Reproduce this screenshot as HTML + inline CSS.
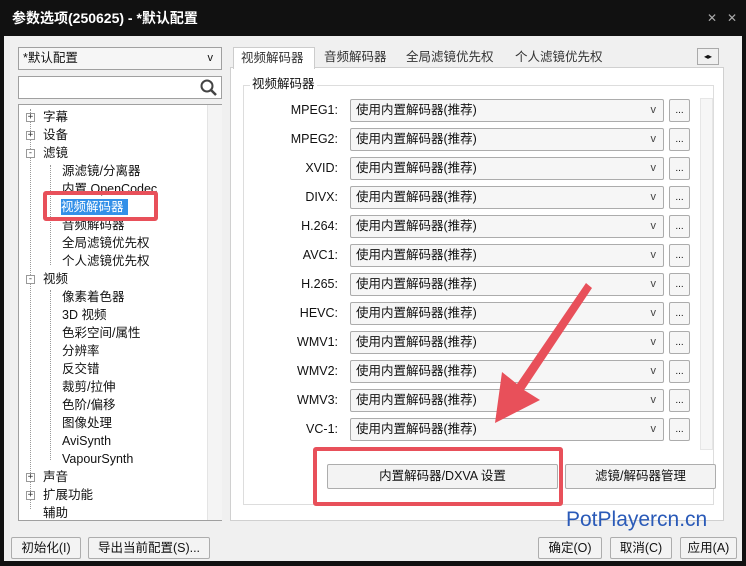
<!DOCTYPE html><html><head><meta charset="utf-8"><style>
*{box-sizing:border-box;margin:0;padding:0}
body{width:746px;height:566px;background:#111;position:relative;overflow:hidden;font-family:"Liberation Sans","Noto Sans CJK SC",sans-serif;font-size:12.5px;line-height:16px;color:#111}
.a{position:absolute}
.win{left:4px;top:36px;width:738px;height:525px;background:#f0f0f0}
.box{position:absolute;background:#fff;border:1px solid #a0a0a0}
.btn{position:absolute;background:#f3f3f3;border:1px solid #adadad;border-radius:2px;text-align:center;font-size:12.5px}
.tree div{position:absolute;white-space:nowrap;font-size:12.5px;line-height:16px}
.lbl{position:absolute;width:80px;text-align:right;font-size:12.5px;line-height:16px}
.cb{position:absolute;left:350px;width:314px;height:23px;background:#f6f6f6;border:1px solid #acacac;border-radius:2px;padding:0 5px;font-size:12.5px;line-height:21px}
.cb:after{content:"v";position:absolute;right:7px;top:0;font-size:11px;color:#444}
.dot{position:absolute;left:669px;width:21px;height:23px;background:#f6f6f6;border:1px solid #acacac;border-radius:2px;text-align:center;font-size:10px;line-height:22px}
.tree .pm{position:absolute;width:9px;height:9px;border:1px solid #999;background:#fff;font-size:9px;line-height:7px;text-align:center;color:#333;font-family:"DejaVu Sans Mono",monospace}
</style></head><body>
<div class="a" style="left:12px;top:10px;color:#fff;font-size:14px;font-weight:bold">参数选项(250625) - *默认配置</div>
<div class="a" style="left:707px;top:10px;color:#aaa;font-size:12px">✕&nbsp;&nbsp;&nbsp;✕</div>
<div class="a win"></div>
<div class="box" style="left:18px;top:47px;width:204px;height:23px;background:#f6f6f6;padding:0 4px;line-height:21px">*默认配置<span class="a" style="right:8px;top:0;font-size:11px">v</span></div>
<div class="box" style="left:18px;top:76px;width:204px;height:23px"><svg class="a" style="right:3px;top:2px" width="18" height="18"><circle cx="7" cy="7" r="5.5" stroke="#444" stroke-width="2" fill="none"/><line x1="11" y1="11" x2="16" y2="16" stroke="#444" stroke-width="2.5"/></svg></div>
<div class="box tree" style="left:18px;top:104px;width:204px;height:417px">
<div class="a" style="left:188px;top:0;width:15px;height:415px;background:#f4f4f4;border-left:1px solid #e4e4e4"></div>
<div class="a" style="left:11px;top:4px;height:400px;border-left:1px dotted #999"></div>
<div class="a" style="left:31px;top:60px;height:100px;border-left:1px dotted #999"></div>
<div class="a" style="left:31px;top:185px;height:170px;border-left:1px dotted #999"></div>
<div class="pm" style="left:7px;top:8px">+</div><div style="left:24px;top:4px">字幕</div>
<div class="pm" style="left:7px;top:26px">+</div><div style="left:24px;top:22px">设备</div>
<div class="pm" style="left:7px;top:44px">-</div><div style="left:24px;top:40px">滤镜</div>
<div style="left:43px;top:58px">源滤镜/分离器</div>
<div style="left:43px;top:76px">内置 OpenCodec</div>
<div style="left:42px;top:94px;width:67px;background:#3390e8;color:#fff">视频解码器</div>
<div style="left:43px;top:112px">音频解码器</div>
<div style="left:43px;top:130px">全局滤镜优先权</div>
<div style="left:43px;top:148px">个人滤镜优先权</div>
<div class="pm" style="left:7px;top:170px">-</div><div style="left:24px;top:166px">视频</div>
<div style="left:43px;top:184px">像素着色器</div>
<div style="left:43px;top:202px">3D 视频</div>
<div style="left:43px;top:220px">色彩空间/属性</div>
<div style="left:43px;top:238px">分辨率</div>
<div style="left:43px;top:256px">反交错</div>
<div style="left:43px;top:274px">裁剪/拉伸</div>
<div style="left:43px;top:292px">色阶/偏移</div>
<div style="left:43px;top:310px">图像处理</div>
<div style="left:43px;top:328px">AviSynth</div>
<div style="left:43px;top:346px">VapourSynth</div>
<div class="pm" style="left:7px;top:368px">+</div><div style="left:24px;top:364px">声音</div>
<div class="pm" style="left:7px;top:386px">+</div><div style="left:24px;top:382px">扩展功能</div>
<div style="left:24px;top:400px">辅助</div>
</div>
<div class="a" style="left:43px;top:191px;width:115px;height:30px;border:4px solid #e8505a;border-radius:3px"></div>
<div class="box" style="left:230px;top:67px;width:494px;height:454px;border-color:#d0d0d0"></div>
<div class="a" style="left:233px;top:47px;width:82px;height:22px;background:#fff;border:1px solid #ccc;border-bottom:none;padding:0 7px;line-height:21px;color:#333">视频解码器</div>
<div class="a" style="left:324px;top:49px;color:#333">音频解码器</div>
<div class="a" style="left:406px;top:49px;color:#333">全局滤镜优先权</div>
<div class="a" style="left:515px;top:49px;color:#333">个人滤镜优先权</div>
<div class="a" style="left:697px;top:48px;width:22px;height:17px;border:1px solid #aaa;background:#f0f0f0;font-size:8px;line-height:15px;text-align:center">◂▸</div>
<div class="a" style="left:243px;top:85px;width:471px;height:420px;border:1px solid #ddd"></div>
<div class="a" style="left:250px;top:76px;background:#fff;padding:0 2px">视频解码器</div>
<div class="a" style="left:700px;top:98px;width:13px;height:352px;background:#f6f6f6;border:1px solid #e6e6e6"></div>
<div class="lbl" style="left:258px;top:102px">MPEG1:</div><div class="cb" style="top:99px">使用内置解码器(推荐)</div><div class="dot" style="top:99px">...</div>
<div class="lbl" style="left:258px;top:131px">MPEG2:</div><div class="cb" style="top:128px">使用内置解码器(推荐)</div><div class="dot" style="top:128px">...</div>
<div class="lbl" style="left:258px;top:160px">XVID:</div><div class="cb" style="top:157px">使用内置解码器(推荐)</div><div class="dot" style="top:157px">...</div>
<div class="lbl" style="left:258px;top:189px">DIVX:</div><div class="cb" style="top:186px">使用内置解码器(推荐)</div><div class="dot" style="top:186px">...</div>
<div class="lbl" style="left:258px;top:218px">H.264:</div><div class="cb" style="top:215px">使用内置解码器(推荐)</div><div class="dot" style="top:215px">...</div>
<div class="lbl" style="left:258px;top:247px">AVC1:</div><div class="cb" style="top:244px">使用内置解码器(推荐)</div><div class="dot" style="top:244px">...</div>
<div class="lbl" style="left:258px;top:276px">H.265:</div><div class="cb" style="top:273px">使用内置解码器(推荐)</div><div class="dot" style="top:273px">...</div>
<div class="lbl" style="left:258px;top:305px">HEVC:</div><div class="cb" style="top:302px">使用内置解码器(推荐)</div><div class="dot" style="top:302px">...</div>
<div class="lbl" style="left:258px;top:334px">WMV1:</div><div class="cb" style="top:331px">使用内置解码器(推荐)</div><div class="dot" style="top:331px">...</div>
<div class="lbl" style="left:258px;top:363px">WMV2:</div><div class="cb" style="top:360px">使用内置解码器(推荐)</div><div class="dot" style="top:360px">...</div>
<div class="lbl" style="left:258px;top:392px">WMV3:</div><div class="cb" style="top:389px">使用内置解码器(推荐)</div><div class="dot" style="top:389px">...</div>
<div class="lbl" style="left:258px;top:421px">VC-1:</div><div class="cb" style="top:418px">使用内置解码器(推荐)</div><div class="dot" style="top:418px">...</div>
<div class="a" style="left:244px;top:446px;width:455px;height:10px;background:#fff"></div>
<div class="btn" style="left:327px;top:464px;width:231px;height:25px;line-height:23px">内置解码器/DXVA 设置</div>
<div class="btn" style="left:565px;top:464px;width:151px;height:25px;line-height:23px">滤镜/解码器管理</div>
<div class="a" style="left:313px;top:447px;width:250px;height:59px;border:4px solid #e8505a;border-radius:3px"></div>
<svg class="a" style="left:0;top:0" width="746" height="566"><polygon points="586,283 592,288 524,390 540,400 495,423 502,372 517,384" fill="#e8505a"/></svg>
<div class="a" style="left:566px;top:508px;font-size:21px;line-height:24px;color:#2a5ab8">PotPlayercn.cn</div>
<div class="btn" style="left:11px;top:537px;width:70px;height:22px;line-height:20px">初始化(I)</div>
<div class="btn" style="left:88px;top:537px;width:122px;height:22px;line-height:20px">导出当前配置(S)...</div>
<div class="btn" style="left:538px;top:537px;width:64px;height:22px;line-height:20px">确定(O)</div>
<div class="btn" style="left:610px;top:537px;width:62px;height:22px;line-height:20px">取消(C)</div>
<div class="btn" style="left:680px;top:537px;width:57px;height:22px;line-height:20px">应用(A)</div>
</body></html>
